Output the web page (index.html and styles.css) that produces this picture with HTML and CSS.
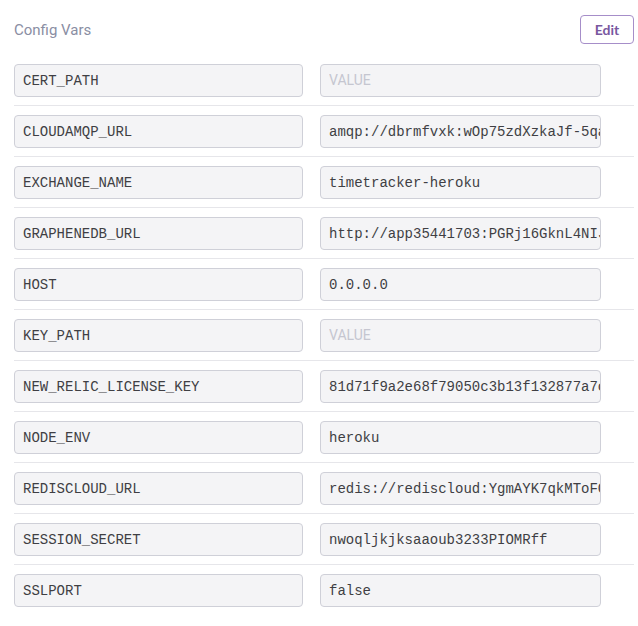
FILE: index.html
```html
<!DOCTYPE html>
<html>
<head>
<meta charset="utf-8">
<link rel="stylesheet" href="styles.css">
</head>
<body>
<div class="panel">
  <div class="header">
    <span class="title">Config Vars</span>
    <button class="edit">Edit</button>
  </div>
  <div class="rows">
    <div class="row"><input class="key" value="CERT_PATH"><input class="val" placeholder="VALUE"></div>
    <div class="row"><input class="key" value="CLOUDAMQP_URL"><input class="val" value="amqp://dbrmfvxk:wOp75zdXzkaJf-5qaR7mHq1BzW@buck.rmq.cloudamqp.com/dbrmfvxk"></div>
    <div class="row"><input class="key" value="EXCHANGE_NAME"><input class="val" value="timetracker-heroku"></div>
    <div class="row"><input class="key" value="GRAPHENEDB_URL"><input class="val" value="http://app35441703:PGRj16GknL4NIJx3@app35441703.sb02.stations.graphenedb.com:24789"></div>
    <div class="row"><input class="key" value="HOST"><input class="val" value="0.0.0.0"></div>
    <div class="row"><input class="key" value="KEY_PATH"><input class="val" placeholder="VALUE"></div>
    <div class="row"><input class="key" value="NEW_RELIC_LICENSE_KEY"><input class="val" value="81d71f9a2e68f79050c3b13f132877a7c2f19d3e"></div>
    <div class="row"><input class="key" value="NODE_ENV"><input class="val" value="heroku"></div>
    <div class="row"><input class="key" value="REDISCLOUD_URL"><input class="val" value="redis://rediscloud:YgmAYK7qkMToFGk2@pub-redis-13443.us-east-1-3.1.ec2.garantiadata.com:13443"></div>
    <div class="row"><input class="key" value="SESSION_SECRET"><input class="val" value="nwoqljkjksaaoub3233PIOMRff"></div>
    <div class="row last"><input class="key" value="SSLPORT"><input class="val" value="false"></div>
  </div>
</div>
</body>
</html>
```
FILE: styles.css
```css
html, body {
  margin: 0;
  padding: 0;
  background: #ffffff;
}
.panel {
  margin-left: 14px;
  width: 620px;
}
.header {
  display: flex;
  justify-content: space-between;
  align-items: center;
  padding-top: 15px;
  height: 29px;
  margin-bottom: 11px;
}
.title {
  font-family: "Roboto", "Lato", sans-serif;
  font-size: 15px;
  color: #8a8ea3;
}
.edit {
  box-sizing: border-box;
  height: 29px;
  width: 54px;
  padding: 0;
  border: 1px solid #a68ec9;
  border-radius: 4px;
  background: #ffffff;
  color: #79589f;
  font-family: "Lato", "Roboto", sans-serif;
  font-weight: bold;
  font-size: 14px;
}
.row {
  display: flex;
  gap: 17px;
  padding: 9px 0 8px;
  border-bottom: 1px solid #e6e6ea;
}
.row.last {
  border-bottom: none;
}
input {
  box-sizing: border-box;
  height: 33px;
  margin: 0;
  padding: 0 0 0 8px;
  border: 1px solid #cfd0d8;
  border-radius: 4px;
  background: #f4f4f6;
  color: #3f3f44;
  font-family: "Liberation Mono", "DejaVu Sans Mono", monospace;
  font-size: 14px;
  outline: none;
}
input::placeholder {
  color: #c5c6d0;
  font-family: "Roboto", sans-serif;
}
.key {
  width: 289px;
}
.val {
  width: 281px;
}
```
